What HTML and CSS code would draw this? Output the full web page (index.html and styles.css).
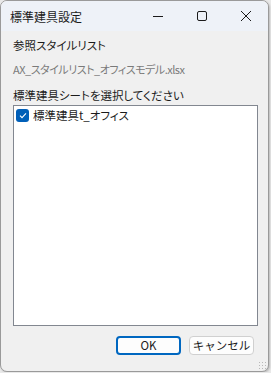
FILE: index.html
```html
<!doctype html>
<html lang="ja">
  <head>
    <meta charset="UTF-8" />
    <title>標準建具設定</title>
    <link rel="stylesheet" href="styles.css">
  </head>
  <body>
    <div class="window">
      <div class="titlebar">
        <p class="title">標準建具設定</p>
        <div class="controls">
          <span class="ctl">
            <svg width="12" height="12" viewBox="0 0 12 12"><path d="M1 6.5h10" stroke="#1b1b1b" stroke-width="1"/></svg>
          </span>
          <span class="ctl">
            <svg width="12" height="12" viewBox="0 0 12 12"><rect x="1.5" y="1.5" width="9" height="9" rx="1.5" fill="none" stroke="#1b1b1b" stroke-width="1"/></svg>
          </span>
          <span class="ctl">
            <svg width="12" height="12" viewBox="0 0 12 12"><path d="M1 1l10 10M11 1L1 11" stroke="#1b1b1b" stroke-width="1"/></svg>
          </span>
        </div>
      </div>
      <div class="content">
        <p class="label first">参照スタイルリスト</p>
        <p class="file">AX_スタイルリスト_オフィスモデル.xlsx</p>
        <p class="label sheet">標準建具シートを選択してください</p>
        <div class="list">
          <div class="item">
            <span class="check">
              <svg width="8" height="7" viewBox="0 0 8 7"><path d="M1 3.6l2 2L7 1.4" fill="none" stroke="#fff" stroke-width="1.1"/></svg>
            </span>
            <span>標準建具t_オフィス</span>
          </div>
        </div>
        <div class="buttons">
          <button class="btn ok">OK</button>
          <button class="btn">キャンセル</button>
        </div>
      </div>
      <span class="grip"></span>
    </div>
  </body>
</html>
```

FILE: styles.css
```css
* {
  box-sizing: border-box;
}
body {
  margin: 0;
  background: #e9e9e9;
  font-family: "Noto Sans CJK JP", "Noto Sans", sans-serif;
  font-feature-settings: "palt";
}
.window {
  position: relative;
  width: 269px;
  height: 372px;
  background: #f0f0f0;
  border: 1px solid #9a9a9a;
  border-radius: 7px;
  overflow: hidden;
  display: flex;
  flex-direction: column;
  box-shadow: 1px 1px 2px #00000033;
}
.titlebar {
  height: 30px;
  background: #eef2f8;
  display: flex;
  align-items: center;
  justify-content: space-between;
}
.title {
  margin: 0 0 0 9px;
  font-size: 12px;
  color: #1b1b1b;
}
.controls {
  display: flex;
  height: 100%;
}
.ctl {
  width: 44px;
  display: flex;
  align-items: center;
  justify-content: center;
}
.content {
  flex: 1;
  padding: 4px 10px 0 12px;
  display: flex;
  flex-direction: column;
  font-size: 11.5px;
  color: #1b1b1b;
}
.label {
  margin: 0;
  height: 18px;
  line-height: 18px;
}
.first {
  margin-top: 1px;
}
.file {
  margin: 6px 0 0 0;
  height: 18px;
  line-height: 18px;
  font-size: 11px;
  letter-spacing: -0.5px;
  color: #7a7a7a;
}
.sheet {
  margin-top: 8px;
}
.list {
  margin-top: 1px;
  height: 221px;
  background: #ffffff;
  border: 1px solid #828790;
  padding: 2px 2px;
}
.item {
  display: flex;
  align-items: center;
  gap: 4px;
  height: 14px;
  font-size: 11.5px;
}
.check {
  width: 13px;
  height: 13px;
  border-radius: 3px;
  background: #005fb8;
  display: flex;
  align-items: center;
  justify-content: center;
}
.buttons {
  display: flex;
  justify-content: flex-end;
  gap: 8px;
  margin-top: 10px;
  padding-right: 4px;
}
.btn {
  width: 65px;
  height: 19px;
  padding: 0;
  font-family: inherit;
  font-size: 11.5px;
  color: #1b1b1b;
  background: #fdfdfd;
  border: 1px solid #d0d0d0;
  border-radius: 4px;
  line-height: 17px;
}
.ok {
  border: 2px solid #0067c0;
  line-height: 15px;
}
.grip {
  position: absolute;
  right: 2px;
  bottom: 2px;
  width: 8px;
  height: 8px;
  background-image: radial-gradient(#b8b8b8 0.8px, transparent 1px);
  background-size: 3px 3px;
}
```
